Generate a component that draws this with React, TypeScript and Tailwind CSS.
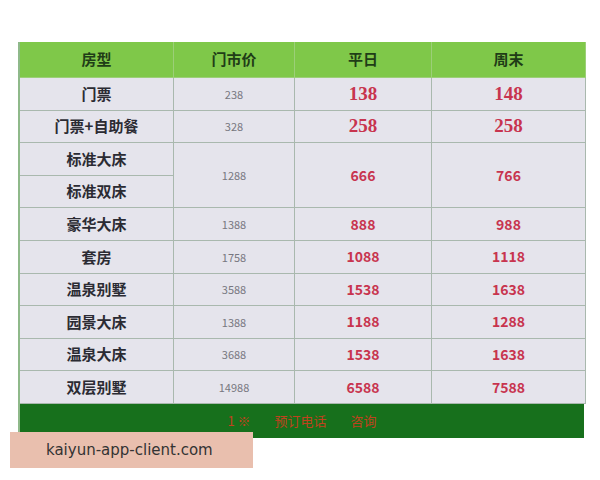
const rows = [
  { name: "门票", price: "238", weekday: "138", weekend: "148", big: true },
  { name: "门票+自助餐", price: "328", weekday: "258", weekend: "258", big: true },
  { name: "标准大床", price: "1288", weekday: "666", weekend: "766", span: true },
  { name: "标准双床" },
  { name: "豪华大床", price: "1388", weekday: "888", weekend: "988" },
  { name: "套房", price: "1758", weekday: "1088", weekend: "1118" },
  { name: "温泉别墅", price: "3588", weekday: "1538", weekend: "1638" },
  { name: "园景大床", price: "1388", weekday: "1188", weekend: "1288" },
  { name: "温泉大床", price: "3688", weekday: "1538", weekend: "1638" },
  { name: "双层别墅", price: "14988", weekday: "6588", weekend: "7588" },
]

const cell = "flex items-center justify-center border-r border-b border-[#a9b8ae] bg-[#e5e4ec]"

export default function App() {
  return (
    <div className="relative h-[480px] w-[600px] bg-white font-['Noto_Sans_CJK_SC',sans-serif]">
      <div className="pl-[18px] pt-[42px]">
        <div className="grid w-[566px] grid-cols-[154px_121px_137px_154px] grid-rows-[36px_repeat(10,32.6px)] border-l-2 border-[#8fb98a]">
          {["房型", "门市价", "平日", "周末"].map((h) => (
            <div
              key={h}
              className="flex items-center justify-center border-r border-b border-[#9ccf78] bg-[#7fc849] text-[15px] font-bold text-[#1f3d17]"
            >
              {h}
            </div>
          ))}
          {rows.map((r) => (
            <div key={r.name} className="contents">
              <div className={`${cell} text-[15px] font-bold text-[#2b2b33]`}>{r.name}</div>
              {r.price && (
                <>
                  <div className={`${cell} text-[11px] text-[#777780] ${r.span ? "row-span-2" : ""}`}>{r.price}</div>
                  <div
                    className={`${cell} font-bold text-[#c8344f] ${r.span ? "row-span-2" : ""} ${
                      r.big ? "font-['Liberation_Serif',serif] text-[19px]" : "text-[14px]"
                    }`}
                  >
                    {r.weekday}
                  </div>
                  <div
                    className={`${cell} font-bold text-[#c8344f] ${r.span ? "row-span-2" : ""} ${
                      r.big ? "font-['Liberation_Serif',serif] text-[19px]" : "text-[14px]"
                    }`}
                  >
                    {r.weekend}
                  </div>
                </>
              )}
            </div>
          ))}
        </div>
        <div className="flex h-[34px] w-[566px] items-center justify-center gap-6 border-l-2 border-[#8fb98a] bg-[#17701c] text-[13px] text-[#c0421e]">
          <span>1 ※</span>
          <span>预订电话</span>
          <span>咨询</span>
        </div>
      </div>
      <div className="absolute left-[10px] top-[432px] flex h-[36px] w-[243px] items-center pl-[36px] bg-[#e9bfae] font-['DejaVu_Sans',sans-serif] text-[15px] text-[#333]">
        kaiyun-app-client.com
      </div>
    </div>
  )
}
